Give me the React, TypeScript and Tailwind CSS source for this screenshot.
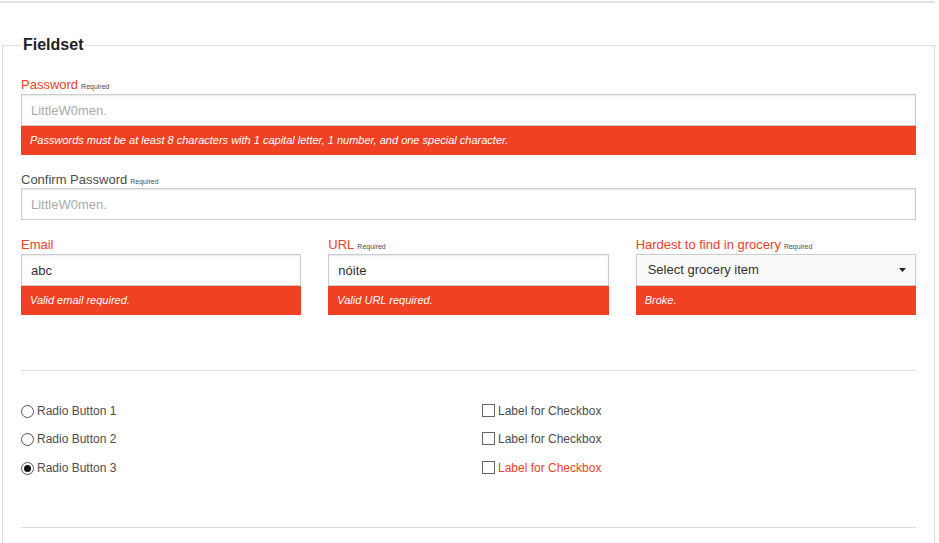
export default function App() {
  const labelBase = "block h-[16px] leading-[16px] text-[13px]";
  const req = <span className="ml-[3px] text-[7px] leading-[7px] text-[#4d4d4d]">Required</span>;
  const inputCls =
    "block w-full h-[32px] border border-[#cccccc] bg-white px-[9px] text-[13px] text-[#333] placeholder:text-[#aaa] shadow-[inset_0_1px_2px_rgba(0,0,0,0.1)] outline-none";
  const errCls = "h-[29px] bg-[#f04124] px-[9px] text-[11px] italic text-white leading-[29px]";

  return (
    <div className="min-h-screen bg-white font-['Liberation_Sans',Arial,sans-serif] text-[#4d4d4d]">
      <div className="mt-px h-[2px] w-[935px] bg-[#e2e2e2]" />

      <fieldset className="ml-[2px] mt-[33px] w-[933px] border border-[#dddddd] px-[18px] pb-[40px]">
        <legend className="px-[2px] text-[16px] font-bold leading-[18px] text-[#222]">Fieldset</legend>

        <div className="pt-[23px]">
          <label className={`${labelBase} mb-[1px] text-[#f04124]`}>
            Password{req}
          </label>
          <input type="password" className={inputCls} placeholder="LittleW0men." />
          <div className={errCls}>
            Passwords must be at least 8 characters with 1 capital letter, 1 number, and one special character.
          </div>
        </div>

        <div className="pt-[17px]">
          <label className={`${labelBase}`}>
            Confirm Password{req}
          </label>
          <input type="password" className={inputCls} placeholder="LittleW0men." />
        </div>

        <div className="grid grid-cols-3 gap-x-[27px] pt-[17px]">
          <div>
            <label className={`${labelBase} mb-[1px] text-[#f04124]`}>Email</label>
            <input className={inputCls} defaultValue="abc" />
            <div className={errCls}>Valid email required.</div>
          </div>
          <div>
            <label className={`${labelBase} mb-[1px] text-[#f04124]`}>
              URL{req}
            </label>
            <input className={inputCls} defaultValue="nóite" />
            <div className={errCls}>Valid URL required.</div>
          </div>
          <div>
            <label className={`${labelBase} mb-[1px] text-[#f04124]`}>
              Hardest to find in grocery{req}
            </label>
            <div className="flex h-[32px] items-center justify-between border border-[#cccccc] bg-[#fafafa] pl-[11px] pr-[9px] text-[13px] text-[#333]">
              <span>Select grocery item</span>
              <svg width="7" height="4" viewBox="0 0 7 4">
                <path d="M0 0h7L3.5 4z" fill="#222" />
              </svg>
            </div>
            <div className={errCls}>Broke.</div>
          </div>
        </div>

        <div className="mt-[55px] h-px bg-[#dddddd]" />

        <div className="grid grid-cols-[461px_1fr] pt-[26px] text-[12px]">
          <div>
            {["Radio Button 1", "Radio Button 2", "Radio Button 3"].map((t, i) => (
              <div key={t} className={`flex items-center ${i === 2 ? "h-[30px]" : "h-[28px]"}`}>
                <span className="flex h-[13px] w-[13px] items-center justify-center rounded-full border border-[#555] bg-white">
                  {i === 2 && <span className="h-[7px] w-[7px] rounded-full bg-[#111]" />}
                </span>
                <span className="ml-[3px]">{t}</span>
              </div>
            ))}
          </div>
          <div>
            {[0, 1, 2].map((i) => (
              <div key={i} className={`flex items-center ${i === 2 ? "h-[30px]" : "h-[28px]"}`}>
                <span className="-mt-[2px] h-[13px] w-[13px] border border-[#666] bg-white" />
                <span className={`ml-[3px] ${i === 2 ? "text-[#f04124]" : ""}`}>Label for Checkbox</span>
              </div>
            ))}
          </div>
        </div>

        <div className="mt-[44px] h-px bg-[#dddddd]" />
      </fieldset>
    </div>
  );
}
